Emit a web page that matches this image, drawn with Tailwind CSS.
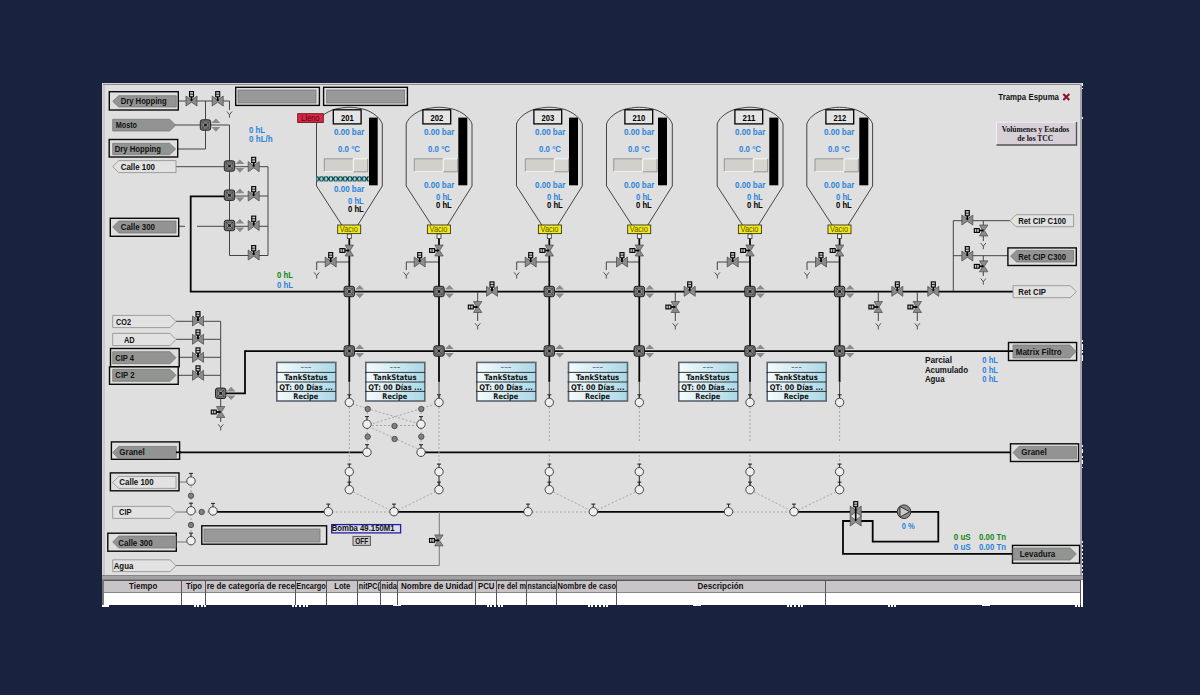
<!DOCTYPE html>
<html lang="es">
<head>
<meta charset="utf-8">
<title>Trampa Espuma</title>
<script src="https://cdn.jsdelivr.net/npm/@tailwindcss/browser@4"></script>
</head>
<body class="bg-[#19233f] w-[1200px] h-[695px] overflow-hidden pl-[102px] pt-[83px] font-['Liberation_Sans',Arial,sans-serif]">
<main class="w-[981px] h-[525px] flex flex-col">
  <svg id="plant" class="block w-[981px] h-[492px] shrink-0 font-bold" viewBox="102 83 981 492" xml:space="preserve">
    <defs>
      <g id="bow"><path d="M-5.5-5V5L0 1.2L5.5 5V-5L0-.8Z" fill="#8b8b8b" stroke="#444" stroke-width=".7"/></g>
      <g id="valve"><use href="#bow"/><path d="M0-4.5V0" stroke="#000" stroke-width="1.8"/><rect x="-2" y="-9.4" width="4" height="5.2" fill="#ccc" stroke="#000" stroke-width="1.1"/><path d="M-2-6.8H2" stroke="#000" stroke-width=".8"/></g>
      <g id="side"><use href="#bow" transform="rotate(90) scale(1 .84)"/><path d="M-5 0H0" stroke="#000" stroke-width="1.8"/><rect x="-9.4" y="-1.9" width="5" height="3.8" fill="#ccc" stroke="#000" stroke-width="1.1"/><path d="M-7-2V2" stroke="#000" stroke-width=".8"/></g>
      <g id="node"><rect x="-5.2" y="-5.2" width="10.4" height="10.4" rx="2" fill="#747474" stroke="#222" stroke-width="1"/><rect x="-3" y="-3" width="6" height="6" fill="#8c8c8c" stroke="#555" stroke-width=".6"/><path d="M-3.6-3.6L3.6 3.6M3.6-3.6L-3.6 3.6" stroke="#333" stroke-width=".7"/><rect x="-1.2" y="-1.2" width="2.4" height="2.4" fill="#111"/><path d="M6-1.9L10.4-6.6L14.8-1.9ZM6 2.1L10.4 6.8L14.8 2.1Z" fill="#8a8a8a"/></g>
      <g id="y"><path d="M-2.6-3L0 .2L2.6-3M0 0V3.2" fill="none" stroke="#444" stroke-width=".9"/></g>
      <g id="port"><path d="M0-4V-7.6M-2-7.6H2" stroke="#222" stroke-width="1"/><circle r="4.2" fill="#efefef" stroke="#333" stroke-width=".9"/></g>
      <circle id="dot" r="2.7" fill="#808080" stroke="#4a4a4a" stroke-width=".9"/>
      <linearGradient id="sky"><stop offset="0" stop-color="#f4fbfd"/><stop offset=".35" stop-color="#dceff5"/><stop offset="1" stop-color="#a9d8e6"/></linearGradient>
      <pattern id="mesh" x="316.7" y="176" width="4.75" height="5.7" patternUnits="userSpaceOnUse"><rect width="4.75" height="5.7" fill="#a4e2e6"/><path d="M.5.4L4.2 5.3M4.2.4L.5 5.3" stroke="#05242a" stroke-width="1.1"/></pattern>
    </defs>
  </svg>
  <div class="h-[5px] shrink-0 bg-[#a2a2a4] border-y border-[#858588]"></div>
  <div class="h-[25px] shrink-0 flex bg-white border-l-2 border-[#777]" id="grid"></div>
  <div class="h-[3px] shrink-0 flex justify-between">
    <i class="block w-[7px] bg-white h-[2px]"></i><i class="block w-3 h-0 border-t-2 border-dotted border-white"></i><i class="block w-4 h-0 border-t-2 border-dotted border-white"></i><i class="block w-2 bg-white h-px"></i><i class="block w-4 h-0 border-t-2 border-dotted border-white"></i><i class="block w-5 h-0 border-t-2 border-dotted border-white"></i><i class="block w-2 bg-white h-px"></i><i class="block w-4 h-0 border-t-2 border-dotted border-white"></i><i class="block w-2 h-0 border-t-2 border-dotted border-white"></i><i class="block w-2 bg-white h-px"></i><i class="block w-2 h-0 border-t-2 border-dotted border-white"></i>
  </div>
</main>
<script>
const BLUE='#2b84dc', GREEN='#138a13', INK='#111';
let out='';
const add=s=>{out+=s};
const rect=(x1,y1,x2,y2,fill,stroke='none',sw=1)=>add(`<rect x="${x1}" y="${y1}" width="${x2-x1}" height="${y2-y1}" fill="${fill}" stroke="${stroke}" stroke-width="${sw}"/>`);
const path=(d,sw=1,c='#444',x='')=>add(`<path d="${d}" fill="none" stroke="${c}" stroke-width="${sw}" ${x}/>`);
const thick=d=>path(d,1.8,'#050505');
const dash=d=>path(d,.9,'#a0a0a0','stroke-dasharray="2 2"');
const use=(id,...pts)=>pts.forEach(([x,y])=>add(`<use href="#${id}" x="${x}" y="${y}"/>`));
const text=(s,x1,x2,y,c=INK,size=8.8,extra='')=>add(`<text x="${x1}" y="${y}" font-size="${size}" fill="${c}" textLength="${(x2-x1).toFixed(1)}" lengthAdjust="spacingAndGlyphs" ${extra}>${s}</text>`);

/* panel */
rect(102,83,1082,575,'#dfdfdf');
path('M102 83.5H1082',1,'#d2d2d6'); path('M102 84.5H1082',1,'#8e8e92'); path('M102.5 83V575',1,'#d5d5d8'); path('M104 85V575',1,'#b4b4b6'); path('M1081 84V575',2,'#a5a5a8');
path('M1082.5 83V140',1,'#fff','stroke-dasharray="3 2 1 28 2 30"'); path('M1082.5 340V362',1,'#fff','stroke-dasharray="2 2 6 1"'); path('M1082.5 445V468',1,'#fff','stroke-dasharray="2 2 4 3"'); path('M1082.5 541V575',1,'#fff','stroke-dasharray="2 2"');

/* inlet piping */
path('M178 101H229.5V110M205.5 101V149H178M175 125H229.5V255.5H268V166.7H176M229.5 196H268M178 226.3H185M197 226.3H268');
thick('M225 196.3H190.7V291.6H1013');
thick('M245 351.1H1009');
thick('M221 393.3H245V350.2');
path('M176 321.3H220.7V422M176 339.3H220.7M176 357.3H220.7M176 375.3H220.7');
use('y',[229.5,114.5],[220.7,427.3]);
use('valve',[191.5,101],[217.7,101],[253.7,166.7],[253.7,196],[253.7,225.5],[253.7,255],[198,321],[198,339.3],[198,357.3],[198,375.3]);
use('node',[205.5,125],[229.5,166],[229.5,195.2],[229.5,225.5],[220.7,393.3]);
use('side',[220.7,412]);

/* return lines */
path('M953.3 291V220.7H1010M953.3 255.7H1010M983.3 221V241M983.3 256V276M477.7 292V321M675.3 292V321M878.3 292V321M917.3 292V321');
use('valve',[967.3,220],[967.3,256],[897.3,291.3],[933.3,291.3],[492,291.3],[689.7,291.3]);
use('side',[983.7,230.5],[983.7,266.3],[477.7,307],[675.3,307],[878.3,307],[917.3,307]);
use('y',[983.3,246],[983.3,281.5],[477.7,326.3],[675.3,326.3],[878.3,326.3],[917.3,326.3]);

/* bottom piping */
thick('M180 452.3H363'); thick('M425 452.3H1013');
thick('M217 511.8H325'); thick('M398 511.8H524'); thick('M597 511.8H725'); thick('M798 511.8H850'); thick('M861 511.8H938.3V541.7H872.7V521H861'); thick('M851 521H843V553.8H1012');
path('M179 482H187M176 512H187M177 542H187M176 565.5H439.3V512',1,'#777');
dash('M349.3 407V467'); dash('M439 407V467');
dash('M352 404L418 423.5'); dash('M373 423.5L436 404'); dash('M372 425.5H418'); dash('M372 428L418 449');
dash('M367.3 412V448'); dash('M421 412V448'); dash('M191 486V536'); dash('M195 512H209');
dash('M332 512H390'); dash('M532 512H589'); dash('M733 512H790');
[[349.3,394,439],[549.3,593.3,639.3],[750,794,839.6]].forEach(([a,m,b])=>{dash(`M${a+4} 492L${m-4} 510`);dash(`M${m+4} 510L${b-4} 492`)});

/* tanks: centre, name, label x, level x, slider x, text x, branch valve x, vent x */
[[349.3,'201',332.7,369,324.3,334,330.7,316.7],[439,'202',422.3,458.3,414.3,424,419.7,406.3],[549.3,'203',533.3,569,525.3,535,530.7,516.7],
 [639.3,'210',624.3,658,613.7,624,622,606.3],[750,'211',734.3,769.3,724.3,735,732.7,717.3],[839.6,'212',825.3,859.3,815,824,821,807]]
.forEach(([c,name,lx,bx,sx,tx,vx,ex],i)=>{
  const f=i===0;
  path(`M${c-7.5} 225L${c-32.8} 186V124C${c-31} 117 ${c-20} 109 ${c-8} 108C${c-3} 107 ${c+3} 107 ${c+8} 108C${c+20} 109 ${c+31} 117 ${c+33} 124V186L${c+8.5} 225`,.9,'#333');
  if(f) rect(316.7,176,369.5,181.7,'url(#mesh)');
  rect(lx+.6,109.8,lx+28.4,123.9,'#e4e4e4','#000',1.3);
  text(name,lx+8.3,lx+21,120.6,'#000',9);
  rect(bx,117.6,bx+9,185.3,'#000');
  if(f) path('M377.5 118V185',.6,'#777');
  text('0.00 bar',tx,tx+30.3,134.8,BLUE);
  text('0.0 °C',tx+4,tx+26,152.3,BLUE);
  rect(sx,158.8,sx+29,171.5,'#d3cfcb'); path(`M${sx} 171.5V158.8H${sx+29}`,.8,'#888'); path(`M${sx} 171.5H${sx+29}`,.8,'#f6f6f6');
  rect(sx+29,158.8,sx+43.4,171.8,'#d8d4d0'); path(`M${sx+29} 171.8V158.8H${sx+43}`,1,'#fafafa'); path(`M${sx+43.4} 158.8V171.8H${sx+29}`,.8,'#888');
  text('0.00 bar',tx,tx+30.3,f?191.8:187.8,BLUE);
  const hx=tx+(f?14:12);
  text('0 hL',hx,hx+15.8,f?203.7:200,BLUE);
  text('0 hL',hx,hx+15.8,f?212.4:208.4,'#000');
  path(`M${c} 262H${ex}V270`);
  thick(`M${c} 238V382`);
  path(`M${c} 381V398`);
  rect(c-2,234,c+2,238.5,'#eee','#333',.8);
  const vx0=c-12+(i===1||i===3?0:i===2?.7:0);
  rect(vx0+.4,225,vx0+23.4,233.6,'#f6ee12','#333',.9);
  text('Vacio',vx0+2.5,vx0+20.5,232.2,'#5a5400',8.5,'font-weight="400"');
  use('side',[c,250.5]); use('valve',[vx,262]); use('y',[ex,275.4]);
  use('node',[c,291.5],[c,351]);
  if(i>1){dash(`M${c} 407V442`);dash(`M${c} 455V467`)}
  path(`M${c} 475V486`,1,'#222');
  use('port',[c,402.4],[c,471.7],[c,489.7]);
});
rect(297.7,113.7,323.3,122.4,'#dc2744','#6b1020',.9);
text('Lleno',301,319.5,121.2,'#4a0614',8.5,'font-weight="400"');

use('port',[367,424.2],[421,424.2],[367,452.3],[421,452.3],[394,511.7],[528,511.7],[593.3,511.7],[728.5,511.7],[794,511.7],[328.3,511.7],[213,511],[191,510.8],[191,481],[191,540.7]);
use('dot',[367.7,409],[421.3,409],[394.5,426],[367.7,436.7],[394.6,439],[421.3,436.7],[191,495.7],[201.7,512],[191,525]);
use('valve',[855.7,511]); use('bow',[855.7,521]); path('M855.7 511V521',1.6,'#000');
use('side',[438.9,540.4]);
add('<circle cx="904" cy="511.7" r="6.8" fill="#8a8a8a" stroke="#333"/><path d="M900 506.5V517L909.7 511.7Z" fill="#ccc" stroke="#222" stroke-width=".9"/>');

/* status cards */
[276,365,476,567.7,678,766.4].forEach(x=>{
  rect(x+.8,362.4,x+59.8,401,'url(#sky)','#5d6670',1.6);
  path(`M${x} 372.4H${x+60}M${x} 382H${x+60}M${x} 391.4H${x+60}`,.9,'#222');
  const f='font-family="DejaVu Sans"';
  text('---',x+24.5,x+35.5,370,'#555',8,f+' font-weight="400"');
  text('TankStatus',x+8.3,x+51.5,380.3,INK,7.8,f);
  text('QT: 00 Días ...',x+3.3,x+56.8,389.8,INK,7.8,f);
  text('Recipe',x+17.3,x+42.3,398.8,INK,7.8,f);
});

/* line tags: shape, direction, dark, label, label x1 x2 baseline, frame */
[[112.7,95.7,176.3,107,'l',1,'Dry Hopping',120.7,166.7,104.3,[109.3,91.7,178.3,110]],
 [112.7,119.3,175.7,131,'r',1,'Mosto',115.7,137,128],
 [112.7,143.3,175.7,154.7,'r',1,'Dry Hopping',114.7,161,152.2,[109.2,139.5,177.7,157]],
 [112.7,160.6,176,172.6,'l',0,'Calle 100',120.7,155,170.2],
 [112.7,221,176,233,'l',1,'Calle 300',120.7,155,230.4,[110.3,218.3,178.7,236.3]],
 [112.7,315.4,176,327.6,'r',0,'CO2',116,131,324.5],
 [112.7,333.4,176,345.6,'r',0,'AD',124,134.7,342.8],
 [112.7,351.7,176,363.7,'r',1,'CIP 4',115.3,134,360.8,[110.5,348.5,179.2,366.7]],
 [112.7,369.3,176,381.3,'r',1,'CIP 2',115.3,134.5,378.2,[109.5,366.9,178.2,384.3]],
 [112.7,446.4,176.3,458.6,'l',1,'Granel',119.3,144.7,454.8,[111.4,441.9,179.6,459.3]],
 [112.7,476.4,176,488.4,'l',0,'Calle 100',119.3,153.7,485,[110.4,472.9,179,490.8]],
 [112.7,506.4,176,518.4,'r',0,'CIP',119,131.7,515.2],
 [112.7,536,176,548,'l',1,'Calle 300',118.3,152.7,545.9,[107.8,533.2,176.3,551.2]],
 [112.7,559.8,176,571.6,'r',0,'Agua',113.7,133.3,568.9],
 [1010,214.7,1073.6,226.7,'l',0,'Ret CIP C100',1018.3,1066,223.9],
 [1010.5,250.4,1073.6,262,'l',1,'Ret CIP C300',1018.3,1066,259.7,[1007.9,247.9,1076.3,265.5]],
 [1013,285.7,1076.3,297.7,'r',0,'Ret CIP',1018.3,1046,295.3],
 [1013,345,1076,358,'r',1,'Matrix Filtro',1015.7,1061.7,355,[1008.5,342.5,1076.6,360.5]],
 [1013,446.4,1076.5,458.8,'l',1,'Granel',1021.3,1046.7,455.3,[1010.5,443.8,1078.6,461.5]],
 [1013,548,1076.3,560,'r',1,'Levadura',1019.7,1055.3,556.8,[1012.5,545.4,1079.6,563.2]]]
.forEach(([x1,y1,x2,y2,d,dark,s,a,b,base,fr])=>{
  const m=(y1+y2)/2;
  const p=d==='l'?`${x1},${m} ${x1+6},${y1} ${x2},${y1} ${x2},${y2} ${x1+6},${y2}`:`${x1},${y1} ${x2-6},${y1} ${x2},${m} ${x2-6},${y2} ${x1},${y2}`;
  if(fr) rect(...fr,'#dfdfdf','#0a0a0a',1.4);
  add(`<polygon points="${p}" fill="${dark?'#929491':'#e2e2e2'}" stroke="${dark?'#7a7a7a':'#8c8c8c'}" stroke-width=".8"/>`);
  text(s,a,b,base);
});
thick('M176 452.3H181'); thick('M1009 351.1H1013');

/* empty display boxes */
[[235.7,87.3,319.4,105.4,238,90,316,103],[323.6,87.3,407.4,105.4,326.7,90,404.6,103],[201.8,525.8,326.6,544.2,204,529,320,542]]
.forEach(b=>{rect(b[0],b[1],b[2],b[3],'#dfdfdf','#0a0a0a',1.4);rect(b[4],b[5],b[6],b[7],'#999','#777',.8)});

/* readouts */
text('0 hL',249,265,133.2,BLUE); text('0 hL/h',249,272.7,142.3,BLUE);
text('0 hL',277,293,278.3,GREEN); text('0 hL',277,293,288,BLUE);
text('Trampa Espuma',998.3,1059,99.7);
path('M1063.3 94L1069.3 100M1069.3 94L1063.3 100',2,'#8e1020');
rect(996,121.7,1077,145.5,'#d8d0d8'); path('M996.5 145V122.2H1076.5',1,'#f4f0f4'); path('M1076.5 122V145H996.5',1.4,'#57535a');
text('Volúmenes y Estados',1001.7,1069.3,131.8,INK,8.4,'font-family="Liberation Serif"');
text('de los TCC',1017.3,1053.3,141.2,INK,8.4,'font-family="Liberation Serif"');
text('Parcial',924.9,952,363); text('Acumulado',924.9,968,372.7); text('Agua',924.9,944.5,381.8);
[363,372.7,382].forEach(y=>text('0 hL',982.3,998,y,BLUE));
text('0 %',901.7,914.7,529.2,BLUE);
text('0 uS',953.7,970.7,540.4,GREEN); text('0.00 Tn',979,1006,540.4,GREEN);
text('0 uS',953.7,970.7,550,BLUE); text('0.00 Tn',979,1006,550,BLUE);
rect(331.7,524.6,400.6,532.9,'#dcdce8','#2222a8',1.3); text('Bomba 49.150M1',331.7,394.5,531.4);
rect(353,536.4,370.4,545.4,'#c9c9c9','#555',1); text('OFF',355.3,368.3,543.9);
document.getElementById('plant').insertAdjacentHTML('beforeend',out);

/* log table header: label, column width, label offset and label width */
document.getElementById('grid').innerHTML=[['Tiempo',78,25,28.3],['Tipo',24,4,16],['re de categoría de rece',90,.7,88.3],['Encargo',31,.3,29.5],['Lote',31,7.3,16],['nitPC(',23,.8,21],['nida',17,.6,15.4],['Nombre de Unidad',78,3,72],['PCU',21,2,16.4],['re del m',30,.6,28.4],['nstancia',30,.6,28.4],['Nombre de caso',60,.6,58.4],['Descripción',209,80.5,46],['',255,0,0]]
.map(([s,w,o,l])=>`<div class="h-full shrink-0 border-r border-[#555]" style="width:${w}px"><div class="h-[13px] bg-[#c9c4c7] border-t border-b border-t-[#555] border-b-[#8a8688]">${s?`<svg class="block w-full h-[11px] font-bold"><text x="${o}" y="7.6" font-size="8.8" fill="#111" textLength="${l}" lengthAdjust="spacingAndGlyphs">${s}</text></svg>`:''}</div></div>`).join('');
</script>
</body>
</html>
